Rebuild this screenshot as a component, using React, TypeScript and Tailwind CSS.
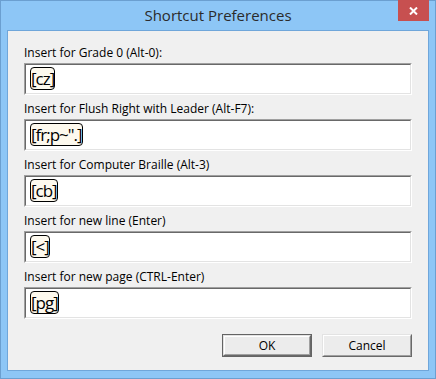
import React from 'react';

const fields = [
  { label: 'Insert for Grade 0 (Alt-0):', value: '[cz]' },
  { label: 'Insert for Flush Right with Leader (Alt-F7):', value: '[fr;p~".]' },
  { label: 'Insert for Computer Braille (Alt-3)', value: '[cb]' },
  { label: 'Insert for new line (Enter)', value: '[<]' },
  { label: 'Insert for new page (CTRL-Enter)', value: '[pg]' },
];

function Field({ label, value }: { label: string; value: string }) {
  return (
    <div className="flex flex-col">
      <div className="h-[16px] leading-[16px] text-[12px] text-black">{label}</div>
      {/* sunken edit box */}
      <div className="mt-[2px] h-[32px] border border-t-[#a0a0a0] border-l-[#a0a0a0] border-b-white border-r-white">
        <div className="h-full border border-t-[#696969] border-l-[#696969] border-b-[#e3e3e3] border-r-[#e3e3e3] bg-white pl-[4px] pt-[2px]">
          <span className="inline-flex h-[23px] items-center rounded-[4px] border border-black bg-[#fdf9ee] px-0 text-[17px] leading-none tracking-[-1px] text-black">
            {value}
          </span>
        </div>
      </div>
    </div>
  );
}

function Button({ label, isDefault }: { label: string; isDefault?: boolean }) {
  return (
    <div
      className={`w-[90px] h-[23px] ${
        isDefault ? 'border border-[#646464]' : ''
      }`}
    >
      <div className="h-full border border-t-[#e3e3e3] border-l-[#e3e3e3] border-b-[#696969] border-r-[#696969]">
        <div className="flex h-full items-center justify-center border border-t-white border-l-white border-b-[#a0a0a0] border-r-[#a0a0a0] bg-[#ececec] text-[12px] text-black">
          {label}
        </div>
      </div>
    </div>
  );
}

export default function App() {
  return (
    <div
      className="w-[436px] h-[379px] flex flex-col border border-[#6b9fd0] bg-[#8dc6f6]"
      style={{ fontFamily: '"Open Sans", "Noto Sans", "Liberation Sans", sans-serif' }}
    >
      {/* title bar */}
      <div className="relative h-[29px] flex items-center justify-center">
        <span className="text-[15px] text-[#2b2b2b] -mt-[1px]">Shortcut Preferences</span>
        <div className="absolute right-[6px] top-[-1px] w-[31px] h-[21px] bg-[#c75050] flex items-center justify-center">
          <svg width="9" height="8" viewBox="0 0 9 8">
            <path d="M1 0.5 L8 7.5 M8 0.5 L1 7.5" stroke="white" strokeWidth="2" />
          </svg>
        </div>
      </div>

      {/* client area */}
      <div className="mx-[6px] mb-[7px] flex-1 border border-[#6fa6da] bg-[#f0f0f0] pl-[16px] pr-[16px] pt-[14px] flex flex-col">
        <div className="flex flex-col gap-[6px]">
          {fields.map((f) => (
            <Field key={f.label} label={f.label} value={f.value} />
          ))}
        </div>
        <div className="mt-[15px] flex justify-end gap-[10px]">
          <Button label="OK" isDefault />
          <Button label="Cancel" />
        </div>
      </div>
    </div>
  );
}
